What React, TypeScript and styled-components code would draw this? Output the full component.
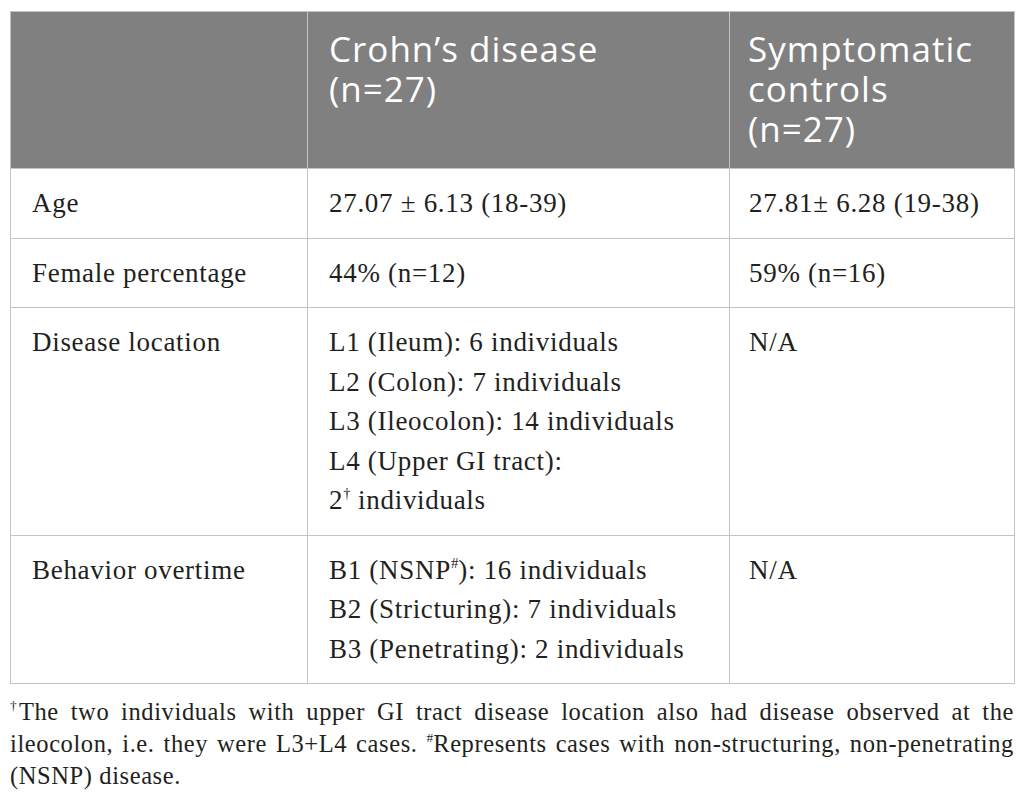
import React from "react";
import styled, { createGlobalStyle } from "styled-components";

const Global = createGlobalStyle`
  html, body { margin: 0; padding: 0; background: #ffffff; }
  body { font-family: "Liberation Serif", "Times New Roman", serif; color: #231f20; }
`;

const Page = styled.div`
  padding: 11px 11px 0 10px;
  width: 1004px;
`;

const Table = styled.table`
  width: 1004px;
  border-collapse: collapse;
  table-layout: fixed;
`;

const HeadCell = styled.th<{ $last?: boolean }>`
  background: #808080;
  color: #ffffff;
  font-family: "Open Sans", "Noto Sans", sans-serif;
  font-weight: 400;
  font-size: 35px;
  letter-spacing: 1px;
  line-height: 40px;
  text-align: left;
  vertical-align: top;
  padding: 17px 21px 19px ${(p) => (p.$last ? 18 : 21)}px;
  border: 1px solid #c4c4c4;
`;

const Cell = styled.td<{ $last?: boolean }>`
  font-size: 27px;
  letter-spacing: 0.7px;
  line-height: 39.5px;
  vertical-align: top;
  padding: 15px 21px 14px ${(p) => (p.$last ? 19 : 21)}px;
  border: 1px solid #c4c4c4;
  color: #231f20;
`;

const Line = styled.div`
  white-space: nowrap;
`;

const Sup = styled.sup<{ $shift?: number }>`
  font-size: 0.55em;
  line-height: 0;
  vertical-align: 0.75em;
  letter-spacing: 0;
  margin-right: ${(p) => p.$shift ?? 0}px;
`;

const Note = styled.p`
  margin: 12px 0 0 0;
  font-size: 24.5px;
  letter-spacing: 0.6px;
  line-height: 32px;
  text-align: justify;
  color: #231f20;
`;

type Row = { label: string; a: React.ReactNode[]; b: React.ReactNode[] };

const rows: Row[] = [
  { label: "Age", a: ["27.07 \u00b1 6.13 (18-39)"], b: ["27.81\u00b1 6.28 (19-38)"] },
  { label: "Female percentage", a: ["44% (n=12)"], b: ["59% (n=16)"] },
  {
    label: "Disease location",
    a: [
      "L1 (Ileum): 6 individuals",
      "L2 (Colon): 7 individuals",
      "L3 (Ileocolon): 14 individuals",
      "L4 (Upper GI tract):",
      <>2<Sup>{"\u2020"}</Sup> individuals</>,
    ],
    b: ["N/A"],
  },
  {
    label: "Behavior overtime",
    a: [
      <>B1 (NSNP<Sup>#</Sup>): 16 individuals</>,
      "B2 (Stricturing): 7 individuals",
      "B3 (Penetrating): 2 individuals",
    ],
    b: ["N/A"],
  },
];

export default function App() {
  return (
    <>
      <Global />
      <Page>
        <Table>
          <colgroup>
            <col style={{ width: 297 }} />
            <col style={{ width: 422 }} />
            <col style={{ width: 285 }} />
          </colgroup>
          <thead>
            <tr>
              <HeadCell />
              <HeadCell>
                Crohn’s disease
                <br />
                (n=27)
              </HeadCell>
              <HeadCell $last>
                Symptomatic
                <br />
                controls
                <br />
                (n=27)
              </HeadCell>
            </tr>
          </thead>
          <tbody>
            {rows.map((r) => (
              <tr key={r.label}>
                <Cell>{r.label}</Cell>
                <Cell>
                  {r.a.map((l, i) => (
                    <Line key={i}>{l}</Line>
                  ))}
                </Cell>
                <Cell $last>
                  {r.b.map((l, i) => (
                    <Line key={i}>{l}</Line>
                  ))}
                </Cell>
              </tr>
            ))}
          </tbody>
        </Table>
        <Note>
          <Sup $shift={-3}>{"\u2020"}</Sup>The two individuals with upper GI tract disease location also had disease observed at the
          ileocolon, i.e. they were L3+L4 cases. <Sup $shift={0}>#</Sup>Represents cases with non-structuring, non-penetrating
          (NSNP) disease.
        </Note>
      </Page>
    </>
  );
}
